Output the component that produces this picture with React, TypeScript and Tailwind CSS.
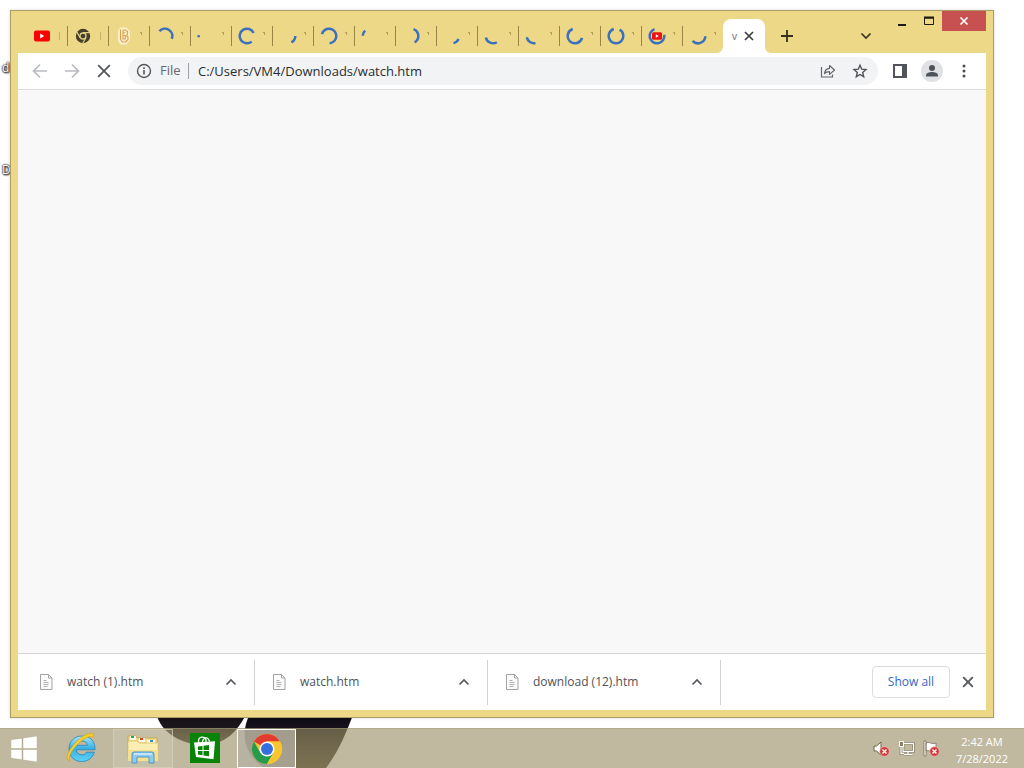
import React from "react";

type TabKind = "youtube" | "chrome" | "b" | "spin" | "spinYoutube";
interface Tab {
  kind: TabKind;
  from?: number;
  to?: number;
}

const tabs: Tab[] = [
  { kind: "youtube" },
  { kind: "chrome" },
  { kind: "b" },
  { kind: "spin", from: -50, to: 112 },
  { kind: "spin", from: 260, to: 276 },
  { kind: "spin", from: 140, to: 425 },
  { kind: "spin", from: 90, to: 152 },
  { kind: "spin", from: 285, to: 535 },
  { kind: "spin", from: 272, to: 318 },
  { kind: "spin", from: 20, to: 150 },
  { kind: "spin", from: 115, to: 168 },
  { kind: "spin", from: 148, to: 258 },
  { kind: "spin", from: 168, to: 260 },
  { kind: "spin", from: 105, to: 342 },
  { kind: "spin", from: 30, to: 342 },
  { kind: "spinYoutube", from: 80, to: 340 },
  { kind: "spin", from: 92, to: 228 },
];

const downloads = ["watch (1).htm", "watch.htm", "download (12).htm"];

function arcPath(from: number, to: number) {
  const point = (deg: number) => {
    const a = ((deg - 90) * Math.PI) / 180;
    return `${(9 + 7.3 * Math.cos(a)).toFixed(2)} ${(9 + 7.3 * Math.sin(a)).toFixed(2)}`;
  };
  return `M${point(from)}A7.3 7.3 0 ${to - from > 180 ? 1 : 0} 1 ${point(to)}`;
}

function TabIcon({ tab }: { tab: Tab }) {
  return (
    <svg viewBox="0 0 18 18" className="size-[18px] shrink-0" aria-hidden="true">
      {tab.kind === "youtube" && (
        <>
          <rect x="1" y="3.5" width="16" height="11" rx="2" fill="#f90404" />
          <path d="M7.2 6.6v4.8L11.2 9z" fill="#fff" />
        </>
      )}
      {tab.kind === "chrome" && (
        <>
          <circle cx="9" cy="9" r="7.2" fill="#453f2b" />
          <circle cx="9" cy="9" r="3" fill="#453f2b" stroke="#e4d186" strokeWidth="1.3" />
          <path d="M9 5.7h6.6M6.1 10.7 2.9 5.1M11.9 10.7 8.7 16.2" stroke="#e4d186" strokeWidth="1.2" />
        </>
      )}
      {tab.kind === "b" && (
        <>
          <path d="M6 1.5h5l3 3v8l-3 4H6l-2-3V4z" fill="#fdf0cc" stroke="#fdf0cc" strokeWidth="2" strokeLinejoin="round" />
          <path
            d="M5.500 2.500v10l2 2.500h3l2.500-2.500V10L11.500 8.500 12.500 7V4.500l-2-1.500H8v9h2.300V8.500H8M8 5.800h2.300"
            fill="none"
            stroke="#dca04e"
            strokeWidth="1.1"
            strokeLinejoin="round"
          />
        </>
      )}
      {tab.from !== undefined && tab.to !== undefined && (
        <path d={arcPath(tab.from, tab.to)} fill="none" stroke="#3a70bd" strokeWidth="2.500" />
      )}
      {tab.kind === "spinYoutube" && (
        <>
          <rect x="4" y="5.300" width="10" height="7.400" rx="1.500" fill="#f01010" />
          <path d="M7.800 7.200v3.600L10.800 9z" fill="#fff" />
        </>
      )}
    </svg>
  );
}

function TabStrip() {
  return (
    <div className="flex h-full items-end pl-2" role="tablist">
      {tabs.map((tab, i) => (
        <button
          key={i}
          role="tab"
          aria-selected="false"
          aria-label={`Tab ${i + 1}`}
          className="flex h-[34px] w-[41px] items-center pl-[7px]"
        >
          <TabIcon tab={tab} />
          <svg viewBox="0 0 17 20" className="h-5 w-[17px] shrink-0" fill="none" aria-hidden="true">
            {i < 2 ? (
              <path d="M8.500 6v8" stroke="#c5ae68" />
            ) : (
              <path d="M7 6.500h2M8.500 6v3" stroke="#b39c58" />
            )}
            {i < tabs.length - 1 && <path d="M16.500 0v20" stroke="#9a8445" />}
          </svg>
        </button>
      ))}
      <div className="relative flex h-[34px] w-[42px] items-center rounded-t-lg bg-white pl-[7px]">
        <svg viewBox="0 0 6 6" className="absolute bottom-0 -left-1.5 size-1.5" aria-hidden="true">
          <path d="M6 0v6H0a6 6 0 0 0 6-6" fill="#fff" />
        </svg>
        <svg viewBox="0 0 6 6" className="absolute -right-1.5 bottom-0 size-1.5" aria-hidden="true">
          <path d="M0 0v6h6a6 6 0 0 1-6-6" fill="#fff" />
        </svg>
        <button role="tab" aria-selected="true" className="w-[9px] overflow-hidden text-[10px] text-[#666]">
          v
        </button>
        <button aria-label="Close tab" className="flex size-5 items-center justify-center">
          <svg viewBox="0 0 10 10" className="size-2.5" fill="none">
            <path d="m1 1 8 8M9 1 1 9" stroke="#3c3c3c" strokeWidth="1.700" />
          </svg>
        </button>
      </div>
      <button aria-label="New tab" className="ml-2 flex h-[34px] w-7 items-center justify-center">
        <svg viewBox="0 0 12 12" className="size-3" fill="none">
          <path d="M6 0v12M0 6h12" stroke="#332e1d" strokeWidth="1.800" />
        </svg>
      </button>
    </div>
  );
}

function TitleBar() {
  return (
    <header className="flex h-[42px] items-start">
      <TabStrip />
      <button aria-label="Search tabs" className="mt-2 mr-2 ml-auto flex h-[34px] w-7 items-center justify-center">
        <svg viewBox="0 0 12 8" className="h-2 w-3" fill="none">
          <path d="m1.500 1.500 4.500 4.500 4.500-4.500" stroke="#3a3420" strokeWidth="1.700" />
        </svg>
      </button>
      <button aria-label="Minimize" className="flex h-5 w-[27px] items-center justify-center">
        <svg viewBox="0 0 12 12" className="size-3">
          <path d="M2 9h8v2H2z" fill="#1d1a10" />
        </svg>
      </button>
      <button aria-label="Maximize" className="flex h-5 w-[27px] items-center justify-center">
        <svg viewBox="0 0 12 12" className="size-3" fill="none">
          <path d="M1.500 3h9v6.500h-9z" stroke="#1d1a10" />
          <path d="M1 2.500h10" stroke="#1d1a10" strokeWidth="2" />
        </svg>
      </button>
      <button aria-label="Close" className="flex h-5 w-11 items-center justify-center bg-[#c75050]">
        <svg viewBox="0 0 10 10" className="size-2.5" fill="none">
          <path d="m1.500 1.500 7 7M8.500 1.500l-7 7" stroke="#fff" strokeWidth="1.700" />
        </svg>
      </button>
    </header>
  );
}

function IconButton({ label, children }: { label: string; children: React.ReactNode }) {
  return (
    <button aria-label={label} className="flex h-7 w-8 shrink-0 items-center justify-center">
      {children}
    </button>
  );
}

function Toolbar() {
  return (
    <div className="flex h-[37px] items-center border-b border-[#d9dadc] bg-white px-1.5">
      <IconButton label="Back">
        <svg viewBox="0 0 16 16" className="size-4" fill="none" stroke="#b9bbbe" strokeWidth="1.700">
          <path d="M15 8H2M8 1.500 1.500 8 8 14.500" />
        </svg>
      </IconButton>
      <IconButton label="Forward">
        <svg viewBox="0 0 16 16" className="size-4" fill="none" stroke="#b9bbbe" strokeWidth="1.700">
          <path d="M1 8h13M8 1.500 14.500 8 8 14.500" />
        </svg>
      </IconButton>
      <IconButton label="Stop loading">
        <svg viewBox="0 0 14 14" className="size-3.5" fill="none" stroke="#505357" strokeWidth="1.700">
          <path d="m1.200 1.200 11.600 11.600M12.800 1.200 1.200 12.800" />
        </svg>
      </IconButton>
      <div className="mr-1.5 ml-2 flex h-7 flex-1 items-center rounded-full bg-[#f1f3f4] pr-0.5">
        <IconButton label="View site information">
          <svg viewBox="0 0 16 16" className="size-4" fill="none" stroke="#55585c">
            <circle cx="8" cy="8" r="6.500" strokeWidth="1.400" />
            <path d="M8 7v4.500M8 4.300v1.600" strokeWidth="1.600" />
          </svg>
        </IconButton>
        <span className="w-7 text-[13px] text-[#66696d]">File</span>
        <span className="mr-[9px] h-4 w-px bg-[#9c9fa3]" />
        <input
          aria-label="Address and search bar"
          defaultValue="C:/Users/VM4/Downloads/watch.htm"
          className="h-7 min-w-0 flex-1 bg-transparent text-[13px] text-[#2c2d30] outline-none"
        />
        <IconButton label="Share">
          <svg viewBox="0 0 16 16" className="size-4" fill="none" stroke="#63666a" strokeWidth="1.200">
            <path d="M1.500 4v10h11v-2.500" />
            <path
              d="M4.500 10.500c.4-3.200 2.200-5 5-5.200V2.500L14.500 7l-5 4.400V8.700c-2.200 0-3.800.5-5 1.800z"
              strokeLinejoin="round"
            />
          </svg>
        </IconButton>
        <IconButton label="Bookmark">
          <svg viewBox="0 0 16 16" className="size-4" fill="none" stroke="#505358" strokeWidth="1.400">
            <path d="m8 2.200 1.700 4 4.300.4-3.300 2.900 1 4.200L8 11.500l-3.700 2.200 1-4.200L2 6.600l4.300-.4z" />
          </svg>
        </IconButton>
      </div>
      <IconButton label="Side panel">
        <svg viewBox="0 0 14 14" className="size-3.5">
          <path d="M0 0h14v14H0zM2 2v10h7V2z" fill="#505359" fillRule="evenodd" />
        </svg>
      </IconButton>
      <IconButton label="Profile">
        <svg viewBox="0 0 22 22" className="size-[22px]">
          <circle cx="11" cy="11" r="11" fill="#dfe1e4" />
          <circle cx="11" cy="8" r="3" fill="#4e525b" />
          <path d="M5 16.500v-1.200C5 13 8.500 12 11 12s6 1 6 3.300v1.200z" fill="#4e525b" />
        </svg>
      </IconButton>
      <IconButton label="Menu">
        <svg viewBox="0 0 4 14" className="h-3.5 w-1" fill="#4a4d52">
          <circle cx="2" cy="2" r="1.500" />
          <circle cx="2" cy="7" r="1.500" />
          <circle cx="2" cy="12" r="1.500" />
        </svg>
      </IconButton>
    </div>
  );
}

function DownloadShelf() {
  return (
    <footer className="flex h-[57px] items-center border-t border-[#d4d5d6] bg-white pr-1.5 pl-1">
      {downloads.map((name) => (
        <div key={name} className="flex h-[45px] w-[233px] items-center border-r border-[#d0d1d3] pr-[15px] pl-4">
          <svg viewBox="0 0 16 18" className="h-[18px] w-4 shrink-0" fill="none" stroke="#a3a3a3" aria-hidden="true">
            <path d="M2.500 1.500h8l3.500 3.500v11.500H2.500zM10.500 1.500V5H14" fill="#fbfbfb" />
            <path d="M5.500 7.500h3M5.500 9.500h5M5.500 11.500h5M5.500 13.500h4" stroke="#b0b0b0" />
          </svg>
          <a href="#" className="ml-[13px] flex-1 text-[12px] text-[#505256]">
            {name}
          </a>
          <button aria-label={`Options for ${name}`} className="flex size-4 items-center justify-center">
            <svg viewBox="0 0 12 8" className="h-2 w-3" fill="none">
              <path d="M1.500 6.500 6 2l4.500 4.500" stroke="#55585c" strokeWidth="1.700" />
            </svg>
          </button>
        </div>
      ))}
      <button className="mr-1.5 ml-auto h-8 w-[78px] rounded border border-[#dadce0] text-[12px] font-medium text-[#3367c6]">
        Show all
      </button>
      <button aria-label="Close downloads bar" className="flex size-6 items-center justify-center">
        <svg viewBox="0 0 12 12" className="size-3" fill="none">
          <path d="m1.200 1.200 9.600 9.600M10.800 1.200l-9.600 9.600" stroke="#55585c" strokeWidth="1.900" />
        </svg>
      </button>
    </footer>
  );
}

function RedCross() {
  return (
    <>
      <circle cx="11.500" cy="11.500" r="4.800" fill="#cf3b3b" stroke="#f0c4bc" strokeWidth=".7" />
      <path d="m9.500 9.500 4 4M13.500 9.500l-4 4" stroke="#fff" strokeWidth="1.400" />
    </>
  );
}

function Taskbar() {
  return (
    <nav
      aria-label="Taskbar"
      className="flex h-10 items-stretch border-t border-[#a39b78]/50 bg-[rgb(153_142_100/0.62)]"
    >
      <button aria-label="Start" className="flex w-12 items-center justify-center">
        <svg viewBox="0 0 26 26" className="size-[26px]" fill="#fff" stroke="#8c8460" strokeWidth=".3">
          <path d="M0 3.800 11 2.200V12.500H0zM12 2 26 0v12.500H12zM0 13.500h11v10.300L0 22.200zM12 13.500h14V26l-14-2z" />
        </svg>
      </button>
      <button aria-label="Internet Explorer" className="flex w-[65px] items-start justify-center pt-0.5">
        <svg viewBox="0 0 32 32" className="size-8">
          <defs>
            <linearGradient id="ieBlue" x1="0" y1="0" x2="0" y2="1">
              <stop offset="0" stopColor="#a5e6fc" />
              <stop offset=".5" stopColor="#35afe4" />
              <stop offset="1" stopColor="#5fd3f6" />
            </linearGradient>
          </defs>
          <path
            d="M30 18.800H11.300c.3 3.300 2.500 5 5.400 5 2.300 0 3.800-.9 4.600-2.600h8c-1.500 5.800-6.500 9.300-12.800 9.300C9.300 30.500 4 25.300 4 17.800 4 10.200 9.500 5 17 5c8.300 0 13.500 5.500 13 13.800zM22.300 14.300c-.3-2.700-2.300-4.300-5.300-4.300-2.800 0-5 1.600-5.500 4.300z"
            fill="url(#ieBlue)"
            stroke="#2584bd"
            strokeWidth=".8"
          />
          <path
            d="M4.500 30.500C0 28.500 2 22 8 14.500 14.500 6.500 23 1 27.500 2.500c1.500.6 1.300 2 .3 4C26 4.800 22.500 5.500 17 9.500 9 15.500 2.500 25 4.500 30.500z"
            fill="#f8ce2d"
            stroke="#cf9c17"
            strokeWidth=".6"
          />
        </svg>
      </button>
      <button
        aria-label="File Explorer"
        className="flex w-[60px] items-center justify-center border border-[#d8d2b8]/70 bg-white/10"
      >
        <svg viewBox="0 0 32 30" className="h-[30px] w-8">
          <path d="M1 2h8l1 2h20v20H1z" fill="#f0dc92" stroke="#c6a13b" strokeWidth=".8" />
          <path d="M3 2h6v4H3zM12 4h6v4h-6zM20 6h8v4h-8z" fill="#fffbe9" />
          <path d="M4 2h3v2H4z" fill="#2ba84a" />
          <path d="M13 4h3v2h-3z" fill="#d9432f" />
          <path d="M23 6h3v2h-3z" fill="#2e93b8" />
          <path d="M1 7h9l2 2h19v17H1z" fill="#fbeeb2" stroke="#dcc068" strokeWidth=".8" />
          <path d="M1 16h30v11H1z" fill="#f6e090" />
          <path d="M5 29V20q0-2 2-2h18q2 0 2 2v9h-5v-6H10v6z" fill="#8fc9ee" stroke="#4c98c9" />
          <path d="M7 20h18" stroke="#d3eefc" strokeWidth="1.500" />
        </svg>
      </button>
      <button aria-label="Store" className="flex w-16 items-start justify-center pt-1">
        <svg viewBox="0 0 30 30" className="size-[30px]">
          <path d="M0 0h30v30H0z" fill="#078307" />
          <path
            d="M8.500 10V8c0-4.500 6-5.500 7.500-1v3M12.500 10c0-5.500 5.500-7.500 7-1.500"
            fill="none"
            stroke="#fff"
            strokeWidth="1.300"
          />
          <path d="m4 9.500 21-1.200-1.500 18L6 24z" fill="#fff" />
          <path d="m8 13.500 4.500-.6V17H8zm5.500-.8 5.500-.7v5h-5.500zM8 18h4.500v4.200L8 21.500zm5.500 0H19v5.200l-5.500-.8z" fill="#078307" />
        </svg>
      </button>
      <button
        aria-label="Google Chrome"
        className="flex w-[59px] items-center justify-center border border-white bg-[#b5b0a4]/75"
      >
        <svg viewBox="0 0 32 32" className="size-8">
          <circle cx="16" cy="16" r="15" fill="#f9c52e" />
          <path d="M16 16 3 8.500A15 15 0 0 1 29 8.500H16z" fill="#e33b2e" />
          <path d="M3 8.500 9.500 20 16 16l6.500 3.800L16 31A15 15 0 0 1 3 8.500z" fill="#279b4d" />
          <path d="M16 8.500h13A15 15 0 0 1 16 31l6.500-11.200z" fill="#f9c52e" />
          <circle cx="16" cy="16" r="7.500" fill="#fff" />
          <circle cx="16" cy="16" r="6" fill="#356fde" />
        </svg>
      </button>
      <div className="mr-4 ml-auto flex items-center gap-2 text-white">
        <button aria-label="Volume muted">
          <svg viewBox="0 0 17 17" className="size-[17px]">
            <path d="M1 6h2.500L8 2v13l-4.500-4H1z" fill="#fff" stroke="#6a6246" />
            <RedCross />
          </svg>
        </button>
        <button aria-label="Network">
          <svg viewBox="0 0 17 17" className="size-[17px]" fill="none">
            <path d="M5 3.500h10.500v8H5zM10 12v2.500M6 14.500h8M3 6v7.500h3" stroke="#6f684c" strokeWidth="2.500" />
            <path d="M5 3.500h10.500v8H5zM10 12v2.500M6 14.500h8M3 6v7.500h3" stroke="#fff" strokeWidth="1.300" />
            <path d="M1.500 1.500h4v5h-4z" fill="#8b8264" stroke="#fff" />
          </svg>
        </button>
        <button aria-label="Action Center alerts">
          <svg viewBox="0 0 17 17" className="size-[17px]">
            <path d="M1 1h2v15H1zM3 3c4-2 5 2 10 0v8c-4 1.500-6-1.500-10 0z" fill="#fff" stroke="#6a6246" strokeWidth=".7" />
            <RedCross />
          </svg>
        </button>
        <div className="ml-2 pt-0.5 text-center text-[11px] leading-[17px]">
          <div>2:42 AM</div>
          <div>7/28/2022</div>
        </div>
      </div>
    </nav>
  );
}

function Wallpaper() {
  return (
    <>
      <svg viewBox="0 0 220 56" className="absolute bottom-0 left-[150px] -z-10 h-14 w-[220px]" aria-hidden="true">
        <defs>
          <linearGradient id="lens" x1="0" y1="0" x2="0" y2="56" gradientUnits="userSpaceOnUse">
            <stop offset="0" stopColor="#0b0812" />
            <stop offset=".3" stopColor="#17121c" />
            <stop offset="1" stopColor="#4e4735" />
          </linearGradient>
          <linearGradient id="lensLeft" x1="0" y1="0" x2="0" y2="34" gradientUnits="userSpaceOnUse">
            <stop offset="0" stopColor="#120d16" />
            <stop offset=".5" stopColor="#1c171c" />
            <stop offset="1" stopColor="#4e473c" />
          </linearGradient>
        </defs>
        <path d="M6 0h91C88 20 74 33 54 33 34 33 10 22 6 0z" fill="url(#lensLeft)" />
        <path d="M101 0h103c-8 22-16 40-28 56h-62C96 44 88 22 101 0z" fill="url(#lens)" />
      </svg>
      <div className="absolute top-[59px] left-[2px] -z-10 text-[12px] leading-[17px] text-white [text-shadow:0_0_2px_#000,0_0_2px_#000,1px_1px_2px_#000]">
        d
      </div>
      <div className="absolute top-[161px] left-[2px] -z-10 text-[12px] leading-[17px] text-white [text-shadow:0_0_2px_#000,0_0_2px_#000,1px_1px_2px_#000]">
        D
      </div>
    </>
  );
}

export default function App() {
  return (
    <div className="relative isolate flex min-h-screen flex-col overflow-hidden bg-white font-['Open_Sans','Noto_Sans',sans-serif]">
      <Wallpaper />
      <main className="mt-2.5 mr-[30px] mb-2.5 ml-2.5 flex flex-1 flex-col border border-[#aa9d68] bg-[#edd888] px-[7px] pb-[7px] shadow-[0_0_3px_rgb(0_0_0/0.15)]">
        <TitleBar />
        <Toolbar />
        <section aria-label="Page" className="flex-1 bg-[#f8f8f8]" />
        <DownloadShelf />
      </main>
      <Taskbar />
    </div>
  );
}
